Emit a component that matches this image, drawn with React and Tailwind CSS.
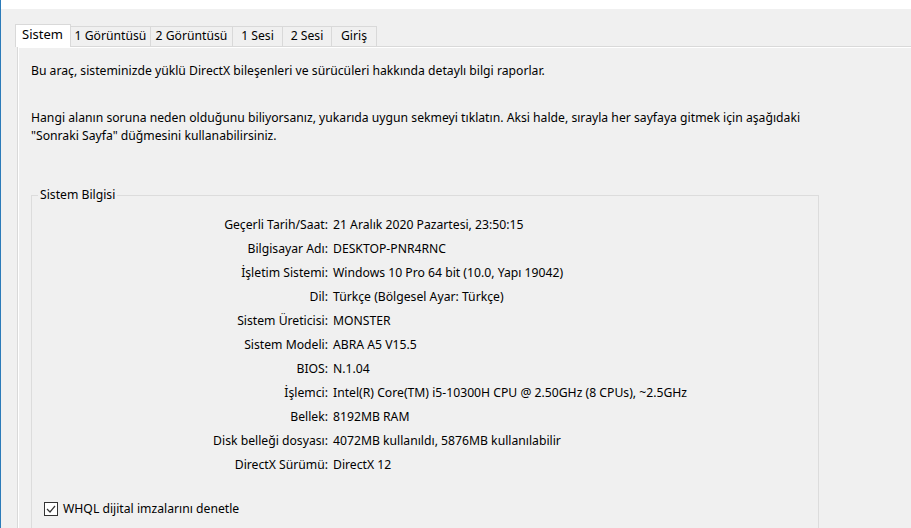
import React from "react";

const rows = [
  ["Geçerli Tarih/Saat:", "21 Aralık 2020 Pazartesi, 23:50:15"],
  ["Bilgisayar Adı:", "DESKTOP-PNR4RNC"],
  ["İşletim Sistemi:", "Windows 10 Pro 64 bit (10.0, Yapı 19042)"],
  ["Dil:", "Türkçe (Bölgesel Ayar: Türkçe)"],
  ["Sistem Üreticisi:", "MONSTER"],
  ["Sistem Modeli:", "ABRA A5 V15.5"],
  ["BIOS:", "N.1.04"],
  ["İşlemci:", "Intel(R) Core(TM) i5-10300H CPU @ 2.50GHz (8 CPUs), ~2.5GHz"],
  ["Bellek:", "8192MB RAM"],
  ["Disk belleği dosyası:", "4072MB kullanıldı, 5876MB kullanılabilir"],
  ["DirectX Sürümü:", "DirectX 12"],
];

const tabs = [
  ["1 Görüntüsü", "w-[80px]"],
  ["2 Görüntüsü", "w-[82px]"],
  ["1 Sesi", "w-[50px]"],
  ["2 Sesi", "w-[49px]"],
  ["Giriş", "w-[45px]"],
];

export default function App() {
  return (
    <div
      className="w-[911px] h-[528px] overflow-hidden bg-[#f0f0f0] border-l border-[#2b7bb9] text-[12.2px] text-black"
      style={{ fontFamily: '"Noto Sans", sans-serif' }}
    >
      <div className="h-[9px] bg-white" />
      <div className="flex items-end pl-[14px] pt-[15px] h-[37px]">
        <div className="relative z-10 w-[56px] h-[23px] -mb-px bg-white border border-b-0 border-[#d9d9d9] pl-[6px] leading-[19px] text-[13px]">
          Sistem
        </div>
        {tabs.map(([t, w]) => (
          <div
            key={t}
            className={`${w} h-[20px] border border-l-0 border-b-0 border-[#d9d9d9] bg-[#f0f0f0] flex items-center justify-center leading-none`}
          >
            {t}
          </div>
        ))}
      </div>
      <div className="ml-[16px] border-t border-l border-[#d9d9d9] h-[500px]">
        <div className="border-t border-l border-white h-full pl-[12px] pt-[14px]">
          <p className="leading-[18px]">
            Bu araç, sisteminizde yüklü DirectX bileşenleri ve sürücüleri hakkında detaylı bilgi raporlar.
          </p>
          <p className="leading-[18px] mt-[29px]">
            Hangi alanın soruna neden olduğunu biliyorsanız, yukarıda uygun sekmeyi tıklatın. Aksi halde, sırayla her sayfaya gitmek için aşağıdaki
            <br />
            "Sonraki Sayfa" düğmesini kullanabilirsiniz.
          </p>
          <div className="relative mt-[50px] w-[788px] h-[400px] border border-[#dcdcdc]">
            <span className="absolute -top-[10px] left-[6px] bg-[#f0f0f0] px-[2px] leading-[18px]">
              Sistem Bilgisi
            </span>
            <div className="pt-[17px] flex flex-col">
              {rows.map(([k, v]) => (
                <div key={k} className="flex h-[24px] items-center">
                  <div className="w-[296px] text-right">{k}</div>
                  <div className="pl-[5px]">{v}</div>
                </div>
              ))}
            </div>
            <label className="absolute left-[12px] top-[304px] flex items-center gap-[5px]">
              <span className="w-[14px] h-[14px] border border-[#333] bg-white flex items-center justify-center">
                <svg width="10" height="10" viewBox="0 0 10 10">
                  <path d="M1 5 L4 8 L9 2" stroke="#333" strokeWidth="1.2" fill="none" />
                </svg>
              </span>
              <span>WHQL dijital imzalarını denetle</span>
            </label>
          </div>
        </div>
      </div>
    </div>
  );
}
